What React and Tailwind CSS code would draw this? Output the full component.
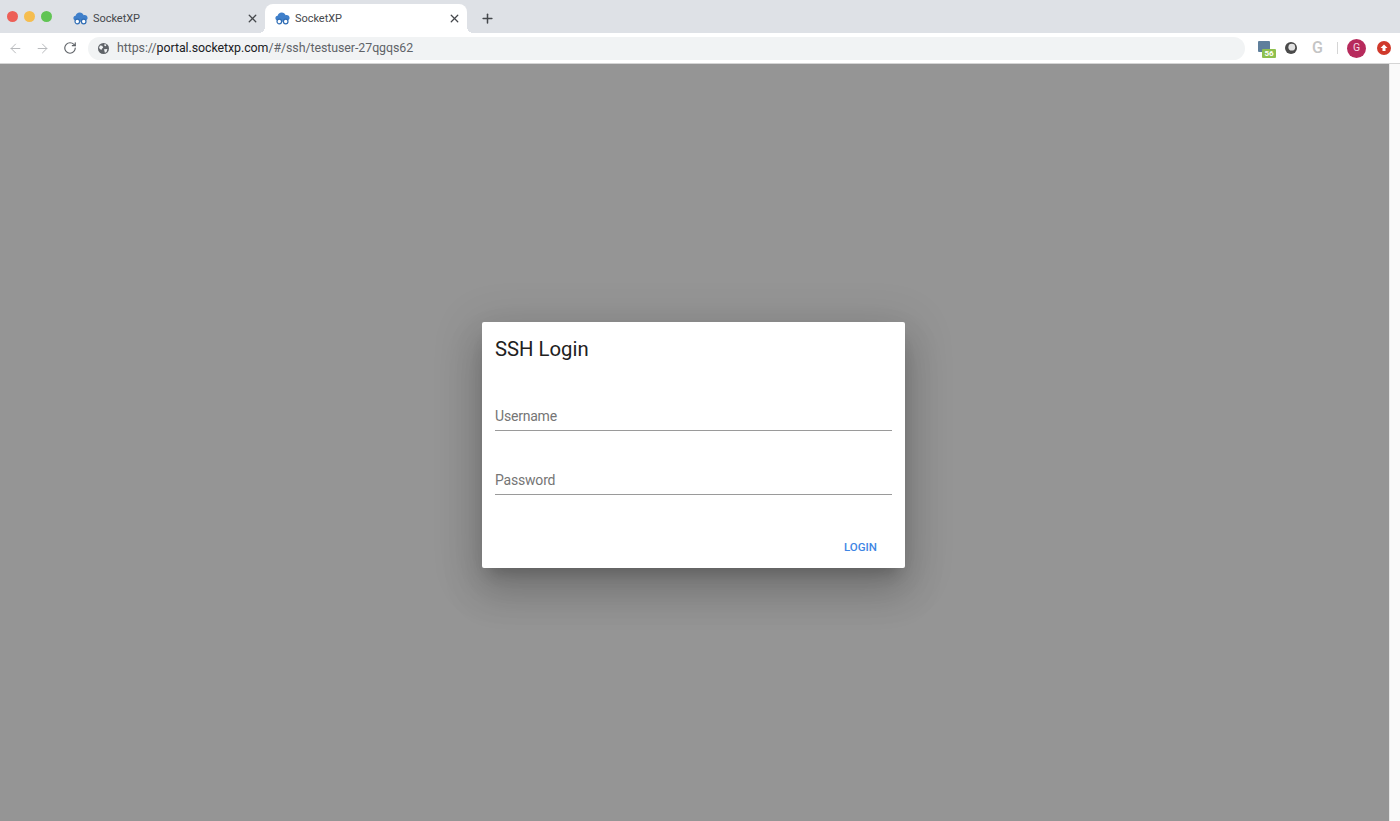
import { ArrowLeft, ArrowRight, RotateCw, X, Plus } from "lucide-react";

const CloudLogo = () => (
  <svg width="15" height="13" viewBox="0 0 15 13" className="shrink-0">
    <path
      d="M3 8.5C1.2 8.5 0.2 7.2 0.4 5.8 0.6 4.6 1.5 3.9 2.6 3.8 3 1.8 4.6 0.4 6.7 0.4c1.9 0 3.4 1.1 4 2.8 0.3-0.1 0.6-0.1 0.9-0.1 1.7 0 3 1.2 3 2.8 0 1.5-1.2 2.6-2.8 2.6z"
      fill="#3f7fca"
    />
    <circle cx="4.3" cy="9.5" r="2.3" fill="#fff" stroke="#2f6db5" strokeWidth="1.2" />
    <circle cx="10.7" cy="9.5" r="2.3" fill="#fff" stroke="#2f6db5" strokeWidth="1.2" />
    <path d="M6.5 9h2" stroke="#2f6db5" strokeWidth="1.1" />
  </svg>
);

const Tab = ({ active }) => (
  <div
    className={`relative flex h-[29px] w-[202px] items-center rounded-t-lg pl-[10px] pr-[6px] ${
      active ? "bg-white" : ""
    }`}
  >
    {active && (
      <>
        <span className="absolute bottom-0 -left-[6px] h-[6px] w-[6px] bg-[radial-gradient(circle_at_0_0,transparent_6px,white_6px)]" />
        <span className="absolute bottom-0 -right-[6px] h-[6px] w-[6px] bg-[radial-gradient(circle_at_100%_0,transparent_6px,white_6px)]" />
      </>
    )}
    <CloudLogo />
    <span className="ml-[5px] mt-[1px] flex-1 text-[11px] tracking-[-0.04px] text-[#45484c]">SocketXP</span>
    <X size={13} strokeWidth={2.4} className="text-[#45484c]" />
  </div>
);

const Field = ({ label, className }) => (
  <div className={`border-b border-[#9a9a9a] pb-[3px] ${className}`}>
    <span className="block text-[14px] leading-[22px] tracking-[-0.2px] text-[#757575]">{label}</span>
  </div>
);

export default function App() {
  return (
    <div className="flex h-[821px] flex-col overflow-hidden bg-white font-['Roboto',sans-serif]">
      {/* tab strip */}
      <div className="flex h-[33px] items-end bg-[#dee1e6]">
        <div className="mb-[11px] ml-[7px] flex w-[56px] gap-[6px]">
          <span className="h-[11px] w-[11px] rounded-full bg-[#ed5f57]" />
          <span className="h-[11px] w-[11px] rounded-full bg-[#f5bd4f]" />
          <span className="h-[11px] w-[11px] rounded-full bg-[#61c454]" />
        </div>
        <Tab />
        <Tab active />
        <Plus size={15} strokeWidth={2.4} className="mb-[7px] ml-[13px] text-[#45484c]" />
      </div>

      {/* toolbar */}
      <div className="flex h-[31px] items-center border-b border-[#d5d5d5] bg-white pl-[8px]">
        <ArrowLeft size={15} strokeWidth={1.6} className="text-[#b8babd]" />
        <ArrowRight size={15} strokeWidth={1.6} className="ml-[12px] text-[#b8babd]" />
        <RotateCw size={14} strokeWidth={2} className="ml-[13px] text-[#5f6368]" />
        <div className="ml-[11px] flex h-[23px] w-[1157px] items-center rounded-full bg-[#f1f3f4] pl-[10px] text-[12.4px] tracking-[-0.07px]">
          <svg width="11" height="11" viewBox="0 0 11 11" className="shrink-0">
            <circle cx="5.5" cy="5.5" r="5.5" fill="#5f6368" />
            <path d="M2 2.5l2.2.3 1 1.6-1 1-1 1.6L1 5zM6.5 1l2 .8-.8 1.4-1.4-.4zM6 6.2l3.4-.2-.9 3-1.6.7z" fill="#f1f3f4" />
          </svg>
          <span className="ml-[8px] text-[#5f6368]">
            https://<span className="text-[#202124]">portal.socketxp.com</span>/#/ssh/testuser-27qgqs62
          </span>
        </div>
        <div className="relative ml-[13px] mt-[-3px] h-[11px] w-[12px] rounded-[1px] bg-[#5f7f9c]">
          <span className="absolute left-[4px] top-[8px] flex h-[9px] w-[14px] items-center justify-center rounded-[1px] bg-[#8fc04f] text-[8px] font-bold leading-none text-white">
            56
          </span>
        </div>
        <svg width="12" height="12" viewBox="0 0 12 12" className="ml-[15px] shrink-0">
          <circle cx="6" cy="6" r="6" fill="#4a4a4a" />
          <circle cx="6.8" cy="5.2" r="3.4" fill="#e2e2e2" />
        </svg>
        <span className="ml-[15px] w-[12px] text-[16px] font-medium leading-none text-[#c4c4c4]">G</span>
        <span className="ml-[13px] h-[12px] w-px bg-[#d5d5d5]" />
        <span className="ml-[9px] flex h-[19px] w-[19px] items-center justify-center rounded-full bg-[#b72a5c] text-[10.5px] text-[#f6dbe5]">
          G
        </span>
        <span className="ml-[11px] flex h-[14px] w-[14px] items-center justify-center rounded-full bg-[#d0392b]">
          <svg width="8" height="8" viewBox="0 0 8 8">
            <path d="M4 .5L7.5 4H5.5v3h-3V4H.5z" fill="#fff" />
          </svg>
        </span>
      </div>

      {/* page */}
      <div className="flex flex-1">
        <div className="flex flex-1 items-center justify-center bg-[#959595] pr-[2px] pt-[5px]">
          <div className="flex h-[246px] w-[423px] flex-col rounded-[2px] bg-white px-[13px] shadow-[0_11px_15px_-7px_rgba(0,0,0,0.2),0_24px_38px_3px_rgba(0,0,0,0.14),0_9px_46px_8px_rgba(0,0,0,0.12)]">
            <h2 className="mt-[11px] text-[20.3px] font-normal leading-[32px] text-[#212121]">SSH Login</h2>
            <Field label="Username" className="mt-[40px]" />
            <Field label="Password" className="mt-[38px]" />
            <div className="mt-[42px] flex justify-end pr-[15px]">
              <span className="text-[11.5px] font-medium leading-[20px] text-[#3f86e4]">LOGIN</span>
            </div>
          </div>
        </div>
        <div className="w-[11px] border-l border-[#e8e8e8] bg-[#fafafa]" />
      </div>
    </div>
  );
}
